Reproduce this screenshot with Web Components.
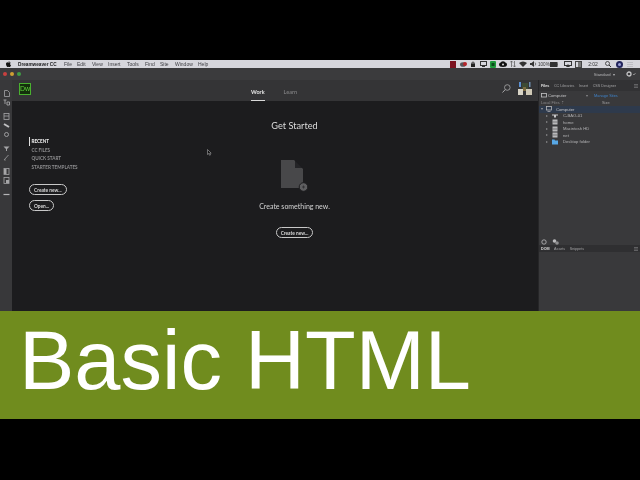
<!DOCTYPE html>
<html>
<head>
<meta charset="utf-8">
<style>
html, body { margin: 0; padding: 0; background: #000; }
body { width: 640px; height: 480px; overflow: hidden; font-family: "Liberation Sans", Arial, sans-serif; }
#page { display: flex; flex-direction: column; height: 480px; padding-top: 60px; box-sizing: border-box; }
#screen { display: flex; flex-direction: column; filter: blur(0.35px); flex: none; }
</style>
</head>
<body>
<div id="page">
    <div id="screen">
        <mac-menubar></mac-menubar>
        <app-titlebar></app-titlebar>
        <app-workspace>
            <tool-rail slot="rail"></tool-rail>
            <start-screen slot="main"></start-screen>
            <files-panel slot="panel"></files-panel>
        </app-workspace>
    </div>
    <title-banner>Basic HTML</title-banner>
</div>

<script>
class MacMenubar extends HTMLElement {
    connectedCallback() {
        this.attachShadow({ mode: 'open' });
        const menus = [['File', 64], ['Edit', 77], ['View', 92], ['Insert', 108], ['Tools', 127], ['Find', 145], ['Site', 160], ['Window', 175], ['Help', 198]];
        this.shadowRoot.innerHTML = `
            <style>
                :host {
                    display: flex;
                    align-items: center;
                    height: 8px;
                    background: #d6d6dc;
                    color: #2b2b2e;
                    font: 5px "Liberation Sans", sans-serif;
                    white-space: nowrap;
                }
                .apple { width: 5px; margin: 0 7px 0 6px; fill: #111; display: block; }
                b { font-size: 4.700px; color: #1a1a1c; width: 46px; }
                .menus { display: flex; width: 190px; }
                .menus span { color: #3d3d42; }
                .status { display: flex; align-items: center; margin-left: auto; height: 8px; }
                .slot { width: 10px; display: flex; justify-content: center; align-items: center; }
                .slot svg { display: block; }
                .pct { width: 11px; font-size: 4.600px; color: #333; }
                .time { width: 20px; text-align: center; color: #333; }
            </style>
            <svg class="apple" height="6" viewBox="0 0 10 12"><path d="M7 0C6 .2 5.200 1 5 2.300 6.200 2.300 7 1.300 7 0zM5 3C4 3 3.600 2.500 2.800 2.500 1.300 2.500 0 4 0 6.200 0 9 2 12 3.200 12c.8 0 1.100-.5 1.900-.5s1 .5 1.900.5C8.100 12 9.400 10 10 8.300 8.800 7.800 8.200 6.900 8.200 5.800c0-1 .5-1.800 1.400-2.300C9 2.800 8 2.400 7.200 2.400 6.200 2.400 5.700 3 5 3z"/></svg>
            <b>Dreamweaver CC</b>
            <div class="menus">
                ${menus.map(([t, x], i) => `<span style="width:${i < menus.length - 1 ? menus[i + 1][1] - x : 12}px">${t}</span>`).join('')}
            </div>
            <div class="status">
                <div class="slot"><svg width="6" height="7"><rect width="6" height="7" fill="#7c1220"/></svg></div>
                <div class="slot"><svg width="7" height="6"><ellipse cx="3" cy="3.500" rx="3" ry="2.300" fill="#55555a"/><circle cx="5" cy="3" r="2" fill="#b5242a"/></svg></div>
                <div class="slot"><svg width="4" height="6"><rect y="2.500" width="4" height="3.500" fill="#222"/><path d="M1 3V1.200h2V3" fill="none" stroke="#222" stroke-width=".7"/></svg></div>
                <div class="slot"><svg width="7" height="6"><rect x=".5" y=".5" width="6" height="4" fill="none" stroke="#333"/><rect x="2" y="5" width="3" height="1" fill="#333"/></svg></div>
                <div class="slot"><svg width="6" height="7"><rect width="6" height="7" rx="1" fill="#1f9a3c"/><rect x="1.500" y="2" width="3" height="3" fill="#0c4a1c"/></svg></div>
                <div class="slot"><svg width="8" height="6"><ellipse cx="4" cy="3.500" rx="4" ry="2.500" fill="#111"/><circle cx="4" cy="2.500" r="2.300" fill="#111"/><circle cx="4" cy="3.500" r="1" fill="#ddd"/></svg></div>
                <div class="slot"><svg width="6" height="6"><path d="M1.500 0v6M0 1.500 1.500 0 3 1.500M4.500 6V0M3 4.500 4.500 6 6 4.500" fill="none" stroke="#555" stroke-width=".7"/></svg></div>
                <div class="slot"><svg width="8" height="6"><path d="M4 6 0 2a6 6 0 0 1 8 0z" fill="#333"/></svg></div>
                <div class="slot"><svg width="7" height="6"><path d="M0 2h1.500L4 0v6L1.500 4H0z" fill="#333"/><path d="M5 1.500a2 2 0 0 1 0 3" fill="none" stroke="#333" stroke-width=".6"/></svg></div>
                <span class="pct">100%</span>
                <div class="slot"><svg width="8" height="5"><rect width="7.500" height="5" fill="#333"/><rect x="7.500" y="1.500" width=".5" height="2" fill="#333"/></svg></div>
                <div class="slot" style="margin-left:4px"><svg width="8" height="6"><rect x=".5" y=".5" width="7" height="4" fill="none" stroke="#333"/><path d="M4 3 6 6H2z" fill="#333"/></svg></div>
                <div class="slot"><svg width="7" height="7"><rect x=".5" y=".5" width="6" height="6" fill="none" stroke="#444"/><rect x="3" y="1" width="3" height="5" fill="#777"/></svg></div>
                <span class="time">2:02</span>
                <div class="slot"><svg width="6" height="6"><circle cx="2.500" cy="2.500" r="2" fill="none" stroke="#333" stroke-width=".8"/><path d="M4 4 6 6" stroke="#333"/></svg></div>
                <div class="slot" style="margin-left:1px"><svg width="7" height="7"><circle cx="3.500" cy="3.500" r="3.500" fill="#23255c"/><circle cx="3.500" cy="3.500" r="1.500" fill="#9aa0d8"/></svg></div>
                <div class="slot" style="margin:0 5px 0 1px"><svg width="6" height="5"><path d="M0 .5h6M0 2.500h6M0 4.500h6" stroke="#bdbdc3"/></svg></div>
            </div>
        `;
    }
}

class AppTitlebar extends HTMLElement {
    connectedCallback() {
        this.attachShadow({ mode: 'open' });
        this.shadowRoot.innerHTML = `
            <style>
                :host {
                    display: flex;
                    align-items: center;
                    height: 12px;
                    padding: 0 3px;
                    gap: 3px;
                    background: #3b3b3d;
                    color: #b4b4b6;
                    font: 4.200px "Liberation Sans", sans-serif;
                }
                i { width: 4px; height: 4px; border-radius: 50%; }
                .mode { margin-left: auto; margin-right: 8px; }
                .gear { display: block; margin-right: 1px; }
            </style>
            <i style="background:#c9403f"></i>
            <i style="background:#cfa032"></i>
            <i style="background:#3f9e45"></i>
            <span class="mode">Standard &nbsp;▾</span>
            <svg class="gear" width="10" height="6" viewBox="0 0 10 6"><circle cx="3" cy="3" r="2" fill="none" stroke="#c4c4c6" stroke-width="1.300"/><path d="M7 3l1 1 1.500-2" fill="none" stroke="#aaa" stroke-width=".7"/></svg>
        `;
    }
}

class AppWorkspace extends HTMLElement {
    connectedCallback() {
        this.attachShadow({ mode: 'open' });
        this.shadowRoot.innerHTML = `
            <style>
                :host { display: flex; height: 231px; }
                ::slotted([slot=main]) { flex: 1; min-width: 0; }
            </style>
            <slot name="rail"></slot>
            <slot name="main"></slot>
            <slot name="panel"></slot>
        `;
    }
}

class ToolRail extends HTMLElement {
    connectedCallback() {
        this.attachShadow({ mode: 'open' });
        const ic = {
            doc: '<path d="M1.500.5h3l2 2v4h-5z" fill="none" stroke="#a5a5a7" stroke-width=".8"/>',
            tags: '<path d="M.5 1h3M2 1v4M4 3h2.500v3H4z" fill="none" stroke="#a5a5a7" stroke-width=".9"/>',
            grid: '<rect x="1" y=".5" width="5" height="6" fill="none" stroke="#a5a5a7" stroke-width=".8"/><path d="M1 3h5" stroke="#a5a5a7" stroke-width=".8"/>',
            link: '<path d="M1 2 6 5" stroke="#c0c0c2" stroke-width="2"/>',
            gear: '<circle cx="3.500" cy="3.500" r="2" fill="none" stroke="#a5a5a7" stroke-width=".9"/>',
            funnel: '<path d="M.5 1.500h6L4 4v2H3V4z" fill="#a5a5a7"/>',
            pen: '<path d="M1 6 5.500 1" stroke="#8c8c8e" stroke-width="1"/><path d="M1 6h2" stroke="#8c8c8e" stroke-width=".7"/>',
            panel: '<rect x="1" y=".5" width="5" height="6" fill="none" stroke="#a5a5a7" stroke-width=".8"/><rect x="1" y="1" width="2.500" height="5" fill="#a5a5a7"/>',
            panel2: '<rect x="1" y=".5" width="5" height="6" fill="none" stroke="#a5a5a7" stroke-width=".8"/><rect x="3" y="3" width="3" height="3" fill="#a5a5a7"/>',
            more: '<path d="M.5 3.500h6" stroke="#b5b5b7" stroke-width="1.200"/>'
        };
        const group = (names) => `<div class="g">${names.map(n => `<svg width="7" height="7" viewBox="0 0 7 7">${ic[n]}</svg>`).join('')}</div>`;
        this.shadowRoot.innerHTML = `
            <style>
                :host {
                    display: flex;
                    flex-direction: column;
                    align-items: center;
                    box-sizing: border-box;
                    width: 12px;
                    padding-top: 9.500px;
                    gap: 7px;
                    background: #38383a;
                }
                .g { display: flex; flex-direction: column; gap: 2px; }
                svg { display: block; }
            </style>
            ${group(['doc', 'tags'])}
            ${group(['grid', 'link', 'gear'])}
            ${group(['funnel', 'pen'])}
            ${group(['panel', 'panel2'])}
            ${group(['more'])}
        `;
    }
}

class PillButton extends HTMLElement {
    connectedCallback() {
        this.attachShadow({ mode: 'open' });
        this.shadowRoot.innerHTML = `
            <style>
                :host {
                    display: inline-flex;
                    align-items: center;
                    justify-content: center;
                    box-sizing: border-box;
                    height: 11px;
                    padding: 0 4px;
                    border: 1px solid #c8c8c8;
                    border-radius: 6px;
                    color: #d8d8d8;
                    font: bold 4.800px Lato, sans-serif;
                    white-space: nowrap;
                }
            </style>
            <slot></slot>
        `;
    }
}

class StartScreen extends HTMLElement {
    connectedCallback() {
        this.attachShadow({ mode: 'open' });
        this.shadowRoot.innerHTML = `
            <style>
                :host { display: flex; flex-direction: column; background: #1c1c1e; font-family: Lato, sans-serif; }
                header {
                    display: flex;
                    height: 21px;
                    background: #343436;
                    padding-left: 7px;
                    align-items: center;
                    flex: none;
                }
                .logo {
                    box-sizing: border-box;
                    width: 12px;
                    height: 12px;
                    margin-bottom: 3px;
                    border: 1px solid #49b02f;
                    background: #14300c;
                    color: #5fcf3c;
                    font: 7px/10px "Liberation Sans", sans-serif;
                    text-align: center;
                }
                .tabs { display: flex; margin-left: 220px; gap: 19px; align-self: stretch; font-size: 5.500px; font-weight: 700; }
                .tabs span { display: flex; align-items: center; padding-top: 3px; box-sizing: border-box; color: #78787a; }
                .tabs .on { color: #e6e6e6; font-weight: 700; border-bottom: 1.500px solid #d8d8d8; }
                .search { margin-left: auto; margin-bottom: 4px; display: block; }
                .collage { margin: 0 6px 4px 7px; display: block; }
                .body { flex: 1; display: flex; padding-left: 17px; position: relative; }
                .cursor { position: absolute; left: 195px; top: 48px; display: block; }
                nav {
                    flex: none;
                    box-sizing: border-box;
                    width: 100px;
                    padding-top: 36px;
                    display: flex;
                    flex-direction: column;
                    align-items: flex-start;
                    font-size: 4.600px;
                    font-weight: 700;
                    color: #8e8e90;
                    white-space: nowrap;
                }
                nav div { height: 8.500px; line-height: 8.500px; padding-left: 2.500px; }
                nav .on { color: #e8e8e8; font-weight: 900; border-left: 1px solid #e0e0e0; padding-left: 1.500px; }
                nav pill-button:first-of-type { margin-top: 13px; }
                nav pill-button + pill-button { margin-top: 5px; }
                .center {
                    flex: 1;
                    padding-right: 78px;
                    padding-top: 18px;
                    display: flex;
                    flex-direction: column;
                    align-items: center;
                }
                h1 { margin: 0; font-size: 9.200px; line-height: 14px; font-weight: 400; color: #dcdcdc; }
                .file { display: block; margin-top: 27px; }
                p { margin: 9px 0 0; font-size: 7px; line-height: 11px; color: #d4d4d4; }
                .center pill-button { margin-top: 15px; }
            </style>
            <header>
                <div class="logo">Dw</div>
                <div class="tabs"><span class="on">Work</span><span>Learn</span></div>
                <svg class="search" width="9" height="9" viewBox="0 0 9 9"><circle cx="5.300" cy="3.500" r="2.800" fill="none" stroke="#a8a8aa" stroke-width=".8"/><path d="M3.300 5.500 .5 8.500" stroke="#a8a8aa" stroke-width="1"/></svg>
                <svg class="collage" width="14" height="13" viewBox="0 0 14 13">
                    <rect x="1" y="0" width="2" height="5" fill="#5b8fd0"/>
                    <rect x="4" y="1" width="6" height="6" fill="#3d4a34"/>
                    <rect x="11" y="0" width="1.500" height="5" fill="#6f8fb0"/>
                    <rect x="0" y="7" width="5" height="6" fill="#d8d4c6"/>
                    <rect x="8" y="7" width="6" height="6" fill="#cfc9b6"/>
                    <rect x="5" y="5" width="3" height="4" fill="#7a6a40"/>
                </svg>
            </header>
            <div class="body">
                <nav>
                    <div class="on">RECENT</div>
                    <div>CC FILES</div>
                    <div>QUICK START</div>
                    <div>STARTER TEMPLATES</div>
                    <pill-button>Create new...</pill-button>
                    <pill-button>Open...</pill-button>
                </nav>
                <div class="center">
                    <h1>Get Started</h1>
                    <svg class="file" width="28" height="32" viewBox="0 0 28 32">
                        <path d="M0 0h13l9 9v19H0z" fill="#48484a"/>
                        <path d="M14 0l8 8h-8z" fill="#1c1c1e" opacity=".8"/>
                        <circle cx="22.500" cy="27" r="4.300" fill="#5e5e60" stroke="#1c1c1e" stroke-width="1"/>
                        <path d="M21 27h3M22.500 25.500v3" stroke="#2a2a2c" stroke-width=".7"/>
                    </svg>
                    <p>Create something new.</p>
                    <pill-button>Create new...</pill-button>
                </div>
                <svg class="cursor" width="5" height="7" viewBox="0 0 5 7"><path d="M.5.500v5l1.200-1 .9 1.800.9-.4-.9-1.700h1.600z" fill="#111" stroke="#a8a8aa" stroke-width=".6"/></svg>
            </div>
        `;
    }
}

class FilesPanel extends HTMLElement {
    connectedCallback() {
        this.attachShadow({ mode: 'open' });
        const drive = '<rect x=".5" y=".5" width="5" height="5" fill="#b9b9bb"/><path d="M.5 3h5" stroke="#5a5a5c" stroke-width=".7"/>';
        const items = [
            ['C-BAO-01', '<path d="M0 1.500h6v1H4v2H2v-2H0z" fill="#c8c8ca"/>'],
            ['home', drive],
            ['Macintosh HD', drive],
            ['net', drive],
            ['Desktop folder', '<path d="M0 .5h2.500l.5 1h3v4H0z" fill="#58a8e6"/>']
        ];
        this.shadowRoot.innerHTML = `
            <style>
                :host {
                    display: flex;
                    flex-direction: column;
                    box-sizing: border-box;
                    width: 102px;
                    background: #39393b;
                    border-left: 1px solid #262628;
                    color: #a2a2a4;
                    font: 4.200px "Liberation Sans", sans-serif;
                    white-space: nowrap;
                }
                .tabs { display: flex; align-items: center; gap: 4.500px; height: 11px; padding-left: 2px; flex: none; background: #323234; font-size: 3.700px; }
                .tabs .on { color: #e0e0e0; font-weight: bold; }
                .tabs svg, .dock svg { margin-left: auto; margin-right: 2px; display: block; }
                .select { display: flex; align-items: center; height: 9px; padding-left: 2px; color: #c4c4c6; flex: none; }
                .select svg { margin-right: 1px; display: block; }
                .select a { color: #3f82c8; font-size: 3.900px; }
                .head { display: flex; height: 6px; line-height: 6px; padding-left: 2px; flex: none; color: #8b8b8d; font-size: 3.900px; }
                .head span:first-child { width: 61px; }
                .head span:last-child { color: #a2a2a4; }
                .row { display: flex; align-items: center; height: 6.500px; padding-left: 7px; color: #b2b2b4; flex: none; }
                .row .tw { width: 0; height: 0; border-left: 2px solid #8a8a8c; border-top: 1.500px solid transparent; border-bottom: 1.500px solid transparent; margin-right: 4px; }
                .row svg { display: block; margin-right: 5px; }
                .root { background: #2e3a4c; padding-left: 2px; color: #c4c4c6; }
                .root .tw { border-left: 1.500px solid transparent; border-right: 1.500px solid transparent; border-top: 2px solid #a0a0a2; border-bottom: 0; margin-right: 3px; }
                .root svg { margin-right: 4px; }
                .spacer { flex: 1; }
                .tools { display: flex; align-items: center; gap: 5px; height: 7px; padding-left: 2px; flex: none; }
                .tools svg { display: block; }
                .dock { display: flex; align-items: center; gap: 4.500px; height: 7px; padding-left: 2px; background: #2f2f31; flex: none; font-size: 3.700px; }
                .dock .on { color: #dcdcdc; font-weight: bold; }
                .bottom { height: 59px; flex: none; }
            </style>
            <div class="tabs">
                <span class="on">Files</span><span>CC Libraries</span><span>Insert</span><span>CSS Designer</span>
                <svg width="4" height="4"><path d="M0 .5h4M0 2h4M0 3.500h4" stroke="#77777a" stroke-width=".7"/></svg>
            </div>
            <div class="select">
                <svg width="6" height="5"><rect x=".5" y=".5" width="5" height="3.500" fill="none" stroke="#c4c4c6" stroke-width=".8"/></svg>
                <span style="width:38px">Computer</span><span style="color:#8a8a8c;width:8px">▾</span>
                <a>Manage Sites</a>
            </div>
            <div class="head"><span>Local Files ⇡</span><span>Size</span></div>
            <div class="row root">
                <i class="tw"></i>
                <svg width="6" height="6"><rect x=".5" y=".5" width="5" height="3.500" fill="none" stroke="#b8b8ba" stroke-width=".8"/><path d="M1.500 5.500h3" stroke="#b8b8ba" stroke-width=".7"/></svg>
                <span>Computer</span>
            </div>
            ${items.map(([t, svg]) => `<div class="row"><i class="tw"></i><svg width="6" height="6">${svg}</svg><span>${t}</span></div>`).join('')}
            <div class="spacer"></div>
            <div class="tools">
                <svg width="6" height="6"><circle cx="3" cy="3" r="2.200" fill="none" stroke="#bcbcbe" stroke-width=".8"/></svg>
                <svg width="7" height="6"><circle cx="2.500" cy="2" r="1.800" fill="#bcbcbe"/><circle cx="5" cy="4" r="1.800" fill="#8e8e90"/></svg>
            </div>
            <div class="dock">
                <span class="on">DOM</span><span>Assets</span><span>Snippets</span>
                <svg width="4" height="4"><path d="M0 .5h4M0 2h4M0 3.500h4" stroke="#77777a" stroke-width=".7"/></svg>
            </div>
            <div class="bottom"></div>
        `;
    }
}

class TitleBanner extends HTMLElement {
    connectedCallback() {
        this.attachShadow({ mode: 'open' });
        this.shadowRoot.innerHTML = `
            <style>
                :host {
                    display: flex;
                    align-items: center;
                    box-sizing: border-box;
                    height: 108px;
                    padding: 0 0 10px 19px;
                    background: #708c1e;
                    color: #fff;
                    font: 83px/1 "Liberation Sans", Arial, sans-serif;
                    white-space: nowrap;
                }
            </style>
            <slot></slot>
        `;
    }
}

customElements.define('mac-menubar', MacMenubar);
customElements.define('app-titlebar', AppTitlebar);
customElements.define('app-workspace', AppWorkspace);
customElements.define('tool-rail', ToolRail);
customElements.define('pill-button', PillButton);
customElements.define('start-screen', StartScreen);
customElements.define('files-panel', FilesPanel);
customElements.define('title-banner', TitleBanner);
</script>
</body>
</html>
